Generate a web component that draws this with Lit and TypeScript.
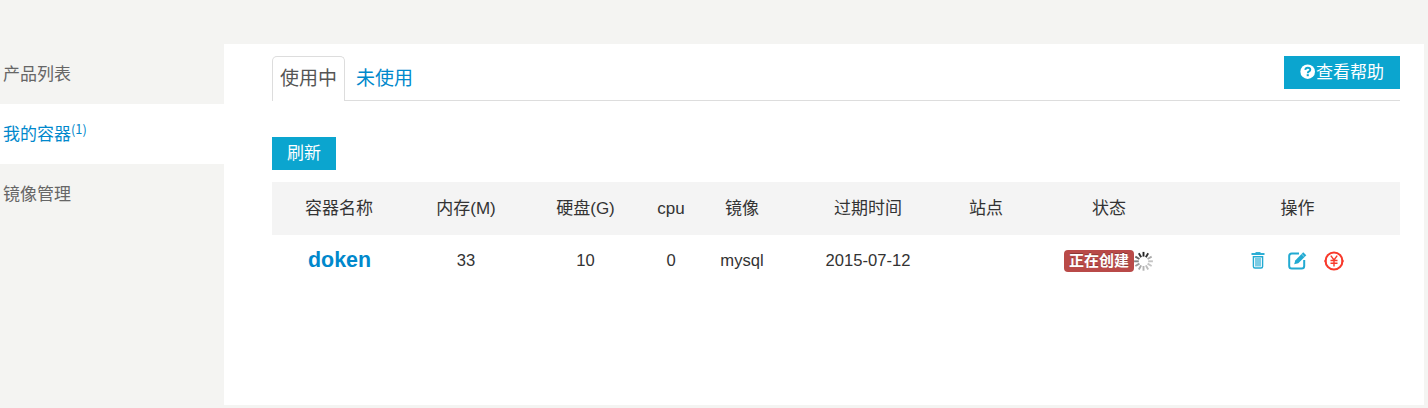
import { LitElement, html, css, svg } from 'lit';
import { customElement, property } from 'lit/decorators.js';

@customElement('loading-spinner')
class LoadingSpinner extends LitElement {
  static styles = css`:host { display: block; width: 20px; height: 20px; } svg { display: block; }`;
  render() {
    const shades = ['#222', '#333', '#aaa', '#c4c4c4', '#c4c4c4', '#bdbdbd', '#b4b4b4', '#a9a9a9', '#9a9a9a', '#858585', '#666', '#333'];
    return html`<svg width="20" height="20" viewBox="0 0 20 20">
      ${shades.map((c, i) => svg`<path d="M9.500 .9V5.600" stroke=${c} stroke-width="1.9" transform="rotate(${i * 30} 9.5 10.3)"></path>`)}
    </svg>`;
  }
}

@customElement('side-menu')
class SideMenu extends LitElement {
  static styles = css`
    :host { display: block; width: 224px; padding-top: 44px; box-sizing: border-box; flex: none; }
    .item { display: block; box-sizing: border-box; height: 60px; line-height: 60px; padding: 1px 0 0 3px; color: #666; }
    .active { background: #fff; color: #0088cc; }
    sup { font: 12.75px/0 "Noto Sans CJK SC", sans-serif; position: relative; top: -6px; vertical-align: baseline; }
  `;
  render() {
    return html`
      <a class="item">产品列表</a>
      <a class="item active">我的容器<sup>(1)</sup></a>
      <a class="item">镜像管理</a>`;
  }
}

@customElement('container-table')
class ContainerTable extends LitElement {
  @property({ attribute: false }) heads = ['容器名称', '内存(M)', '硬盘(G)', 'cpu', '镜像', '过期时间', '站点', '状态', '操作'];
  static styles = css`
    :host { display: block; margin-top: 12px; color: #333; }
    .row { display: grid; grid-template-columns: 134px 120px 119px 52px 90px 162px 74px 172px 205px; height: 52px; align-items: center; text-align: center; line-height: 24px; }
    .body { font-size: 16.6px; }
    .head { background: #f4f4f4; height: 53px; }
    .name { color: #0088cc; font-weight: bold; font-size: 21.400px; padding: 0 0 2px 1px; }
    .status { display: flex; justify-content: center; align-items: center; }
    .label { height: 22px; line-height: 21px; padding: 0 5px; border-radius: 4px; background: #b94a48; color: #fff; font-size: 15px; font-weight: bold; text-shadow: 0 -1px 0 rgba(0,0,0,.25); }
    .ops { display: flex; align-items: center; padding-left: 53px; }
    .trash { margin-left: 3px; } .edit { margin-left: 23px; } .renew { margin-left: 17px; }
    svg { display: block; }
  `;
  render() {
    return html`
      <div class="row head">${this.heads.map((h) => html`<div>${h}</div>`)}</div>
      <div class="row body">
        <div class="name">doken</div><div>33</div><div>10</div><div>0</div><div>mysql</div><div>2015-07-12</div><div></div>
        <div class="status"><span class="label">正在创建</span><loading-spinner></loading-spinner></div>
        <div class="ops">
          <svg class="trash" width="14" height="18" viewBox="0 0 14 18" fill="none" stroke="#22aad2">
            <path d="M.5 2h13" stroke-width="1.9"></path><path d="M4.500 .7h5" stroke-width="1.2"></path>
            <path d="M2.400 4.800v9.700q0 1.500 1.600 1.500h6q1.600 0 1.600-1.500V4.800z" stroke-width="1.400"></path>
            <path d="M5 6v8.500M7 6v8.500M9 6v8.500" stroke-width="1.200"></path>
          </svg>
          <svg class="edit" width="19" height="18" viewBox="0 0 19 18" fill="none" stroke="#22aad2">
            <path d="M11 1.500H3.800Q1.200 1.500 1.200 4.100v9.900Q1.200 16.600 3.800 16.600h9.800q2.600 0 2.600-2.600V8" stroke-width="2"></path>
            <path d="M6.200 12.200l1-3.600L15.200.3l3.100 2.900-8 8z" fill="#22aad2" stroke="none"></path>
            <path d="M13.400 1.900l3 2.900" stroke="#fff" stroke-width=".5"></path>
          </svg>
          <svg class="renew" width="20" height="20" viewBox="0 0 20 20" fill="none" stroke="#f8392b">
            <circle cx="10" cy="10" r="8.500" stroke-width="2"></circle>
            <path d="M0 10l2.500-2.500v5zM20 10l-2.500-2.500v5z" fill="#f8392b" stroke="none"></path>
            <path d="M6.800 4.600L10 9l3.200-4.400M10 9v6.500M6.500 9.500h7M6.500 12.200h7" stroke-width="1.400"></path>
          </svg>
        </div>
      </div>`;
  }
}

@customElement('app-root')
class AppRoot extends LitElement {
  static styles = css`
    :host { display: flex; height: 408px; background: #f4f4f2; font: 17px/24px "Liberation Sans", "Noto Sans CJK SC", sans-serif; overflow: hidden; }
    main { box-sizing: border-box; width: 1200px; height: 361px; margin-top: 44px; background: #fff; padding: 12px 24px 0 48px; }
    .top { display: flex; height: 45px; box-sizing: border-box; border-bottom: 1px solid #ddd; font-size: 19px; }
    .tab { box-sizing: border-box; height: 45px; line-height: 44px; padding: 0 7px; border: 1px solid transparent; border-bottom: 0; color: #0088cc; }
    .current { border-color: #ddd; border-radius: 5px 5px 0 0; color: #555; background: #fff; margin-right: 3px; }
    .btn { display: flex; box-sizing: border-box; height: 33px; line-height: 34px; padding: 0 15px; background: #0ba5cf; color: #fff; font-size: 17px; width: max-content; }
    .help { margin-left: auto; padding: 0 16px; }
    .help svg { margin-top: 8px; }
    .refresh { margin-top: 36px; }
  `;
  render() {
    return html`
      <side-menu></side-menu>
      <main>
        <div class="top">
          <a class="tab current">使用中</a><a class="tab">未使用</a>
          <a class="btn help"><svg width="16" height="16" viewBox="0 0 16 16"><circle cx="7.700" cy="7.700" r="7.300" fill="#fff"></circle><path d="M5.300 5.900Q5.500 3.700 7.800 3.700q2.500 0 2.500 2 0 1.200-1.300 1.800-1.200.5-1.200 1.700" fill="none" stroke="#0ba5cf" stroke-width="1.900"></path><path d="M6.700 10.200h2.100v2H6.700z" fill="#0ba5cf"></path></svg>查看帮助</a>
        </div>
        <a class="btn refresh">刷新</a>
        <container-table></container-table>
      </main>`;
  }
}
